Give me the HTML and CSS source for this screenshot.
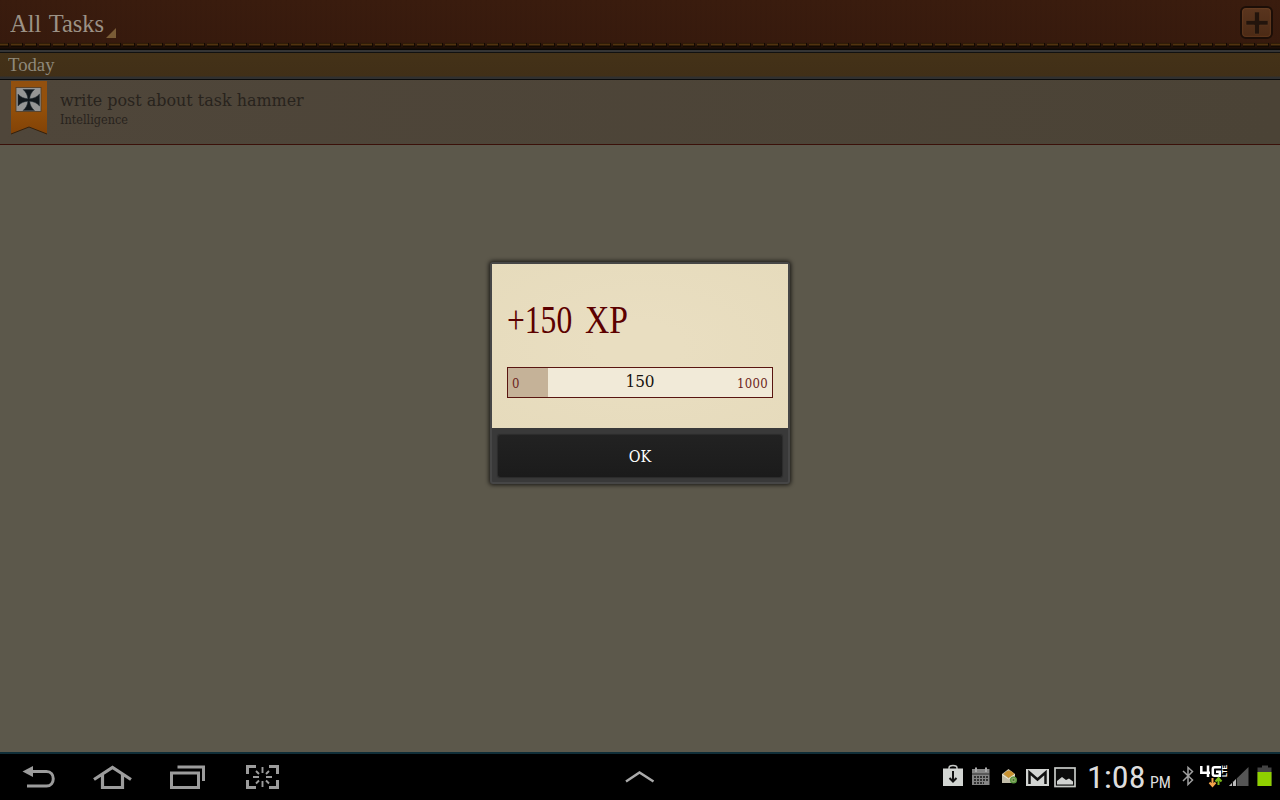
FILE: index.html
```html
<!DOCTYPE html>
<html lang="en">
<head>
<meta charset="utf-8">
<title>All Tasks</title>
<link rel="stylesheet" href="styles.css">
</head>
<body>
<div class="screen">
  <header class="topbar">
    <h1 class="title">All Tasks</h1>
    <svg class="spinner" width="10" height="10"><path d="M10 0V10H0Z" fill="#7a5c36"/></svg>
    <button class="add" aria-label="Add task"><svg width="24" height="24"><path d="M9.500 1h5v8.500h8.500v4.500h-8.500v9h-5v-9H1v-4.500h8.500z" fill="#22140c" stroke="#5b381f" stroke-width=".6"/></svg></button>
    <svg class="stitch" width="1280" height="6"><path d="M-3 3H1280" stroke="#120902" stroke-width="4" stroke-dasharray="12 2"/><path d="M-3 2.500H1280" stroke="#51330f" stroke-width="2" stroke-dasharray="11 3"/></svg>
  </header>
  <div class="section"><span class="section-name">Today</span></div>
  <main class="list">
    <article class="task">
      <svg class="ribbon" width="38" height="55" viewBox="0 0 38 55">
        <defs><linearGradient id="orange" x2="0" y2="1"><stop stop-color="#92500f"/><stop offset=".5" stop-color="#94500a"/><stop offset="1" stop-color="#824206"/></linearGradient></defs>
        <path d="M1 1H37V54L19 47L1 54Z" fill="url(#orange)"/>
        <path d="M1 54L19 47L37 54" fill="none" stroke="#34200c"/>
        <rect x="6" y="7.500" width="25" height="24" fill="#959595" stroke="#4d3a26" stroke-width=".8"/>
        <path d="M13 9.500H24.500C21.500 12 20 15 19.700 18.700C23.500 18.500 27 17 29.500 14V26C27 23 23.500 21.500 19.700 21.300C20 25 21.500 28 24.500 30.500H13C16 28 17.500 25 17.800 21.300C14 21.500 10.500 23 8 26V14C10.500 17 14 18.500 17.800 18.700C17.500 15 16 12 13 9.500Z" fill="#11161b" stroke="#26323a" stroke-width=".5"/>
      </svg>
      <div class="task-text">
        <div class="task-name">write post about task hammer</div>
        <div class="task-skill">Intelligence</div>
      </div>
    </article>
  </main>
  <footer class="system">
    <nav class="nav">
      <svg width="300" height="46" fill="none" stroke="#9c9c9c" stroke-width="3">
        <path d="M31 17.500H46.500C55.500 17.500 55.500 32 46.500 32H27"/><path d="M22.500 17.500L33 12V23Z" fill="#9c9c9c" stroke="none"/>
        <path d="M94 25.500L112.500 13.500L131 25.500M102.500 20V33.500H122.500V20" stroke-width="3.200"/>
        <path d="M171.500 19H198.500V33.500H171.500Z"/><path d="M177.500 13H203.500V27"/>
        <path d="M256 12.500H247.500V20M269 12.500H277.500V20M256 33.500H247.500V26M269 33.500H277.500V26"/>
        <path d="M262.500 13V19M262.500 27V33M253 23H259M266 23H272M256 17L259 20M269 17L266 20M256 29.500L259 26.500M269 29.500L266 26.500" stroke-width="1.900"/>
      </svg>
    </nav>
    <svg class="handle" width="40" height="46" fill="none" stroke="#aaa" stroke-width="2.500"><path d="M6 27.500L19.500 18.500L33.500 27.500"/></svg>
    <div class="status">
      <svg class="notices" width="140" height="46">
        <path d="M3 14.500H23V32H3Z" fill="#d2d5d2"/><path d="M9 15V14Q9 11.500 13 11.500T17 14V15" fill="none" stroke="#c5c8c5" stroke-width="1.500"/><path d="M13 17V27M9.500 24L13 27.500L16.500 24" fill="none" stroke="#111" stroke-width="2"/>
        <path d="M32 15H49.500V31H32Z" fill="#858585"/><path d="M32 20H50" stroke="#2c2c2c"/><path d="M36 13.500V18M46 13.500V18" stroke="#aaa" stroke-width="2"/><path d="M34 23H48M34 26H48M34 29H44" stroke="#171717" stroke-width="1.500" stroke-dasharray="2 1"/>
        <path d="M62 20L68.500 15L75 20V29H62Z" fill="#c2bda9"/><path d="M63.500 20Q69 13 74.500 20L68.500 24Z" fill="#c89130"/><path d="M62 20.500L68.500 25L75 20.500" fill="none" stroke="#f0e9cd"/><circle cx="73.500" cy="26" r="2.900" fill="#8da969" stroke="#5b9a40" stroke-width="1.300"/><circle cx="73.500" cy="26" r="1" fill="#3f7a2c"/>
        <path d="M86 15H109V32H86Z" fill="#d2d4d2"/><path d="M89.500 30V18.500L97.500 25.500L105.500 18.500V30" fill="none" stroke="#101010" stroke-width="2.500"/>
        <rect x="115" y="14" width="20" height="18.500" fill="#0b0b0b" stroke="#c7cac7" stroke-width="1.700"/><path d="M117 30.500V27L122 23L126 26L129 24.500L133 27.500V30.500Z" fill="#d0d2d0"/>
      </svg>
      <span class="clock"><span>1:08</span></span><span class="meridiem">PM</span>
      <svg class="signals" width="100" height="46">
        <path d="M5 17L14.500 26L10 30.500V13.500L14.500 17.500L5 27" fill="none" stroke="#a0a0a0" stroke-width="1.500"/>
        <g fill="none" stroke="#fff" stroke-width="2.500"><path d="M23.300 12V18.700H32M30 11.500V23"/><path d="M43 13.300H36.500Q34.800 13.300 34.800 15V20Q34.800 21.700 36.500 21.700H41.800V17.700H38"/></g>
        <text class="lte" x="0" y="0" transform="translate(49 23) rotate(-90)" textLength="12" lengthAdjust="spacingAndGlyphs">LTE</text>
        <path d="M34.500 24V31.500M31.500 28.500L34.500 32L37.500 28.500" fill="none" stroke="#f4a44b" stroke-width="2"/><path d="M40.500 31V25M37.500 27.500L40.500 24L43.500 27.500" fill="none" stroke="#79ba17" stroke-width="2"/>
        <path d="M51 32L70.500 13V32Z" fill="#555"/><path d="M51 32L54 29V32ZM55 32V28L58 25V32Z" fill="#bbb"/><path d="M54.500 32V27M58.500 32V24" stroke="#111"/>
        <path d="M84 11.500H90V13.500H93.500V32H79.500V13.500H84Z" fill="#434343"/><rect x="79.500" y="18" width="14" height="14" fill="#8fd000"/>
      </svg>
    </div>
  </footer>
</div>
<section class="dialog" role="dialog">
  <div class="paper">
    <div class="reward"><span class="points">+150</span><span class="unit">XP</span></div>
    <div class="meter">
      <div class="fill" style="width:15%"></div>
      <span class="min">0</span><span class="current">150</span><span class="max">1000</span>
    </div>
  </div>
  <div class="actions"><button class="ok">OK</button></div>
</section>
</body>
</html>
```
FILE: styles.css
```css
* { box-sizing: border-box; }
body { margin: 0; width: 1280px; height: 800px; overflow: hidden; background: #5c584b; font-family: "DejaVu Serif Condensed", "DejaVu Serif", serif; font-stretch: condensed; }
button { padding: 0; font-family: inherit; }
svg { display: block; flex: none; }
.screen { display: flex; flex-direction: column; height: 800px; }
.topbar { position: relative; display: flex; flex: none; height: 50px; padding: 0 7px 0 10px; background: repeating-linear-gradient(90deg, rgba(0,0,0,.02) 0 2px, transparent 2px 5px), linear-gradient(#3a1c0e, #371a0d 84%, #1a0c05 96%, #050505); }
.title { width: 96px; margin: 8px 0 0; color: #9c9286; font: 400 26px/31px "Liberation Serif", serif; word-spacing: 2px; white-space: nowrap; transform: scaleX(.94); transform-origin: left; }
.spinner { margin-top: 28px; }
.add { display: grid; place-items: center; width: 33px; height: 33px; margin: 6px 0 0 auto; border: 2px solid #1c0e07; border-radius: 6px; background: linear-gradient(#5a351e, #4b2a15); box-shadow: inset 0 0 2px #84512c; }
.stitch { position: absolute; left: 0; top: 42px; }
.section { flex: none; height: 30px; padding-left: 8px; background: linear-gradient(#353535 0 2px, #111 2px 3px, #443218 3px, #412f17 26px, #303030 27px 29px, #0b0b0b 29px); }
.section-name { display: block; padding-top: 4px; color: #8f897b; font: 19.500px/22px "Liberation Serif", serif; transform: scaleX(.96); transform-origin: left; }
.list { flex: 1; background: #5c584b; }
.task { display: flex; height: 65px; padding-left: 10px; border-bottom: 1px solid #3a1009; background: linear-gradient(90deg, #4f463a, #4b4336); }
.task-text { padding: 9px 0 0 12px; color: #28231d; white-space: nowrap; }
.task-name { font-size: 17px; line-height: 22px; transform: scaleX(1.043); transform-origin: left; }
.task-skill { padding-top: 1px; font-size: 12px; line-height: 16px; transform: scaleX(1.045); transform-origin: left; }
.system { display: flex; justify-content: space-between; flex: none; height: 48px; border-top: 2px solid #102e38; background: #000; position: relative; }
.nav { width: 300px; }
.handle { position: absolute; left: 620px; top: 0; }
.status { display: flex; width: 340px; color: #ddd; font-family: Roboto, sans-serif; }
.clock { width: 59px; margin-left: 7px; font-size: 31px; font-weight: 400; line-height: 47px; white-space: nowrap; }
.clock span { display: inline-block; transform: scaleX(1.1); transform-origin: left; }
.meridiem { width: 34px; padding-left: 3px; font-size: 16px; font-weight: 400; line-height: 57px; }
.meridiem, .signals { transform: translateX(1px); }
.signals { margin-left: -3px; }
.lte { fill: #fff; font: 700 7px "Liberation Sans", sans-serif; }
.dialog { position: absolute; left: 490px; top: 262px; width: 300px; height: 222px; border: 2px solid #464646; border-radius: 3px; background: #393939; box-shadow: 0 0 4px 1px rgba(0,0,0,.75); }
.paper { height: 164px; padding: 34px 15px 0; background: radial-gradient(ellipse at center, #e9dec1 20%, #e6dbbc 100%); }
.reward { display: flex; height: 69px; color: #5c0000; font: 40.500px/44px "Liberation Serif", serif; white-space: nowrap; }
.points { width: 78px; transform: scaleX(.78); transform-origin: left; }
.unit { transform: scaleX(.83); transform-origin: left; }
.meter { position: relative; display: flex; justify-content: space-between; height: 31px; padding: 0 4px; border: 1px solid #591510; background: #f1ead8; color: #6c2420; font-size: 13px; line-height: 32px; }
.fill { position: absolute; left: 0; top: 0; height: 100%; background: #c5b298; }
.min, .max { position: relative; }
.max { letter-spacing: .3px; }
.current { position: absolute; inset: 0; text-align: center; color: #15110d; font-size: 17px; line-height: 27px; }
.actions { padding: 7px 6px 0; }
.ok { display: block; width: 284px; height: 42px; padding-top: 1px; border: 0; border-radius: 2px; background: linear-gradient(#222, #1b1b1b); box-shadow: 0 0 1px 1px #2c2c2c; color: #fff; font-size: 16px; }
```
